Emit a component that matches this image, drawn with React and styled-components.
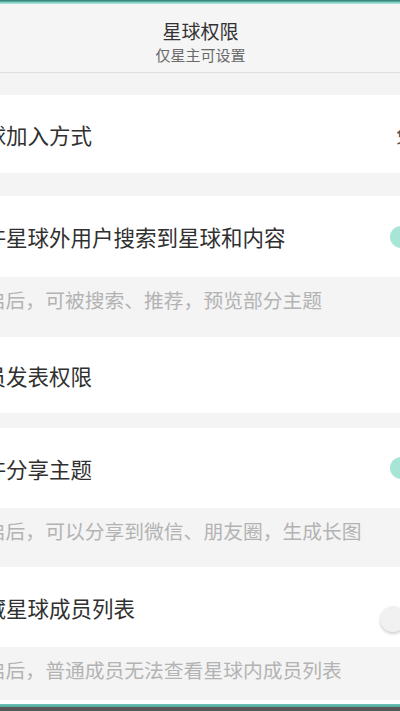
import React, { useState } from "react";
import styled, { createGlobalStyle } from "styled-components";

const GlobalStyle = createGlobalStyle`
  html, body {
    margin: 0;
    padding: 0;
    background: #f4f4f4;
    overflow: hidden;
  }
  body {
    font-family: "Noto Sans CJK SC", "Noto Sans", sans-serif;
  }
`;

const Frame = styled.div`
  display: flex;
  flex-direction: column;
  height: 711px;
  overflow: hidden;
`;

const TopEdge = styled.div`
  height: 4px;
  flex-shrink: 0;
  background: linear-gradient(#3d8a7d 0, #3d8a7d 1px, #6fc7b7 2px, #b9ebe2 4px);
`;

const BottomEdge = styled.div`
  height: 11px;
  flex-shrink: 0;
  background: linear-gradient(
    #ffffff 0,
    #ffffff 4px,
    #6cc7b6 4px,
    #4fa797 7px,
    #5c5c5c 7px,
    #555 11px
  );
`;

// the screenshot is a crop of a wider phone screen
const Screen = styled.div`
  flex: 1;
  width: 507px;
  margin-left: -53px;
  display: flex;
  flex-direction: column;
  background: #f4f4f4;
  overflow: hidden;
`;

const Header = styled.header`
  height: 69px;
  flex-shrink: 0;
  box-sizing: border-box;
  padding-top: 15px;
  display: flex;
  flex-direction: column;
  align-items: center;
  gap: 2px;
  background: #f5f5f5;
  border-bottom: 1px solid #dedede;
`;

const HeaderTitle = styled.div`
  font-size: 19px;
  line-height: 24px;
  color: #333;
`;

const HeaderSub = styled.div`
  font-size: 15px;
  line-height: 20px;
  color: #6a6a6a;
`;

const Gap = styled.div`
  height: ${p => p.h}px;
  flex-shrink: 0;
`;

const Row = styled.div`
  height: ${p => p.h}px;
  flex-shrink: 0;
  display: flex;
  align-items: center;
  justify-content: space-between;
  padding: 0 16px;
  background: #fff;
`;

const RowLabel = styled.span`
  font-size: 21.5px;
  color: #303030;
  white-space: nowrap;
`;

const RowValue = styled.span`
  display: flex;
  align-items: center;
  gap: 6px;
  font-size: 19px;
  color: #555;
  margin-right: 4px;
`;

const Desc = styled.div`
  height: ${p => p.h}px;
  flex-shrink: 0;
  box-sizing: border-box;
  padding: 11px 16px 0 19px;
  font-size: 19.8px;
  line-height: 24px;
  color: #b3b3b3;
  white-space: nowrap;
`;

const Track = styled.button`
  position: relative;
  width: 48px;
  height: 22px;
  border: 0;
  padding: 0;
  margin-top: ${p => (p.on ? "0" : "24px")};
  border-radius: 11px;
  background: ${p => (p.on ? "#a7e5d7" : "#dcdcdc")};
  cursor: pointer;
`;

const Thumb = styled.span`
  position: absolute;
  top: -2px;
  ${p => (p.on ? "right: -6px;" : "left: -10px;")}
  width: 26px;
  height: 26px;
  border-radius: 50%;
  background: ${p => (p.on ? "#3fc2a6" : "#f1f1f1")};
  box-shadow: 0 2px 3px rgba(0, 0, 0, 0.18);
`;

const Switch = ({ initial }) => {
  const [on, setOn] = useState(initial);
  return (
    <Track on={on ? 1 : 0} onClick={() => setOn(!on)}>
      <Thumb on={on ? 1 : 0} />
    </Track>
  );
};

const Chevron = () => (
  <svg width="8" height="14" viewBox="0 0 8 14">
    <path d="M1 1l6 6-6 6" fill="none" stroke="#bbb" strokeWidth="1.6" />
  </svg>
);

const App = () => {
  return (
    <Frame>
      <GlobalStyle />
      <TopEdge />
      <Screen>
        <Header>
          <HeaderTitle>星球权限</HeaderTitle>
          <HeaderSub>仅星主可设置</HeaderSub>
        </Header>
        <Gap h={22} />
        <Row h={78}>
          <RowLabel>星球加入方式</RowLabel>
          <RowValue>免费</RowValue>
        </Row>
        <Gap h={23} />
        <Row h={81}>
          <RowLabel>允许星球外用户搜索到星球和内容</RowLabel>
          <Switch initial={true} />
        </Row>
        <Desc h={60}>开启后，可被搜索、推荐，预览部分主题</Desc>
        <Row h={76}>
          <RowLabel>成员发表权限</RowLabel>
          <Chevron />
        </Row>
        <Gap h={15} />
        <Row h={80}>
          <RowLabel>允许分享主题</RowLabel>
          <Switch initial={true} />
        </Row>
        <Desc h={59}>开启后，可以分享到微信、朋友圈，生成长图</Desc>
        <Row h={80}>
          <RowLabel>隐藏星球成员列表</RowLabel>
          <Switch initial={false} />
        </Row>
        <Desc h={60}>开启后，普通成员无法查看星球内成员列表</Desc>
      </Screen>
      <BottomEdge />
    </Frame>
  );
};

export default App;
